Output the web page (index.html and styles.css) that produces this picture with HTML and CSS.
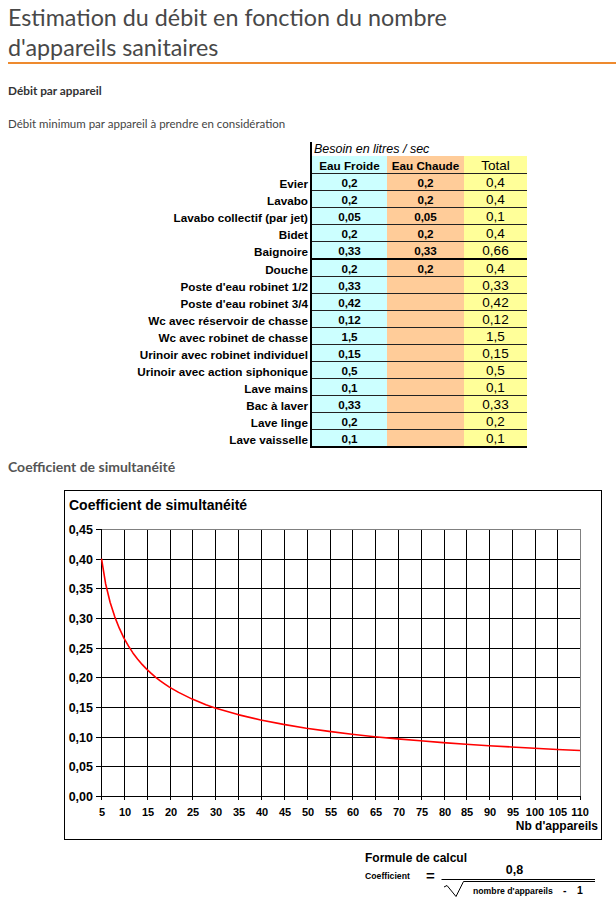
FILE: index.html
```html
<!DOCTYPE html>
<html lang="fr">
<head>
<meta charset="utf-8">
<title>Estimation du débit</title>
<link rel="stylesheet" href="styles.css">
</head>
<body>
<h1 class="title">Estimation du débit en fonction du nombre<br>d'appareils sanitaires</h1>
<h2 class="sub">Débit par appareil</h2>
<p class="intro">Débit minimum par appareil à prendre en considération</p>

<table class="debits">
  <tr class="unit"><td class="lbl"></td><td class="unit-cell" colspan="3">Besoin en litres / sec</td></tr>
  <tr class="head"><td class="lbl"></td><td class="ef">Eau Froide</td><td class="ec">Eau Chaude</td><td class="tot">Total</td></tr>
  <tr><td class="lbl">Evier</td><td class="ef">0,2</td><td class="ec">0,2</td><td class="tot">0,4</td></tr>
  <tr><td class="lbl">Lavabo</td><td class="ef">0,2</td><td class="ec">0,2</td><td class="tot">0,4</td></tr>
  <tr><td class="lbl">Lavabo collectif (par jet)</td><td class="ef">0,05</td><td class="ec">0,05</td><td class="tot">0,1</td></tr>
  <tr><td class="lbl">Bidet</td><td class="ef">0,2</td><td class="ec">0,2</td><td class="tot">0,4</td></tr>
  <tr class="sep"><td class="lbl">Baignoire</td><td class="ef">0,33</td><td class="ec">0,33</td><td class="tot">0,66</td></tr>
  <tr><td class="lbl">Douche</td><td class="ef">0,2</td><td class="ec">0,2</td><td class="tot">0,4</td></tr>
  <tr><td class="lbl">Poste d'eau robinet 1/2</td><td class="ef">0,33</td><td class="ec"></td><td class="tot">0,33</td></tr>
  <tr><td class="lbl">Poste d'eau robinet 3/4</td><td class="ef">0,42</td><td class="ec"></td><td class="tot">0,42</td></tr>
  <tr><td class="lbl">Wc avec réservoir de chasse</td><td class="ef">0,12</td><td class="ec"></td><td class="tot">0,12</td></tr>
  <tr><td class="lbl">Wc avec robinet de chasse</td><td class="ef">1,5</td><td class="ec"></td><td class="tot">1,5</td></tr>
  <tr><td class="lbl">Urinoir avec robinet individuel</td><td class="ef">0,15</td><td class="ec"></td><td class="tot">0,15</td></tr>
  <tr><td class="lbl">Urinoir avec action siphonique</td><td class="ef">0,5</td><td class="ec"></td><td class="tot">0,5</td></tr>
  <tr><td class="lbl">Lave mains</td><td class="ef">0,1</td><td class="ec"></td><td class="tot">0,1</td></tr>
  <tr><td class="lbl">Bac à laver</td><td class="ef">0,33</td><td class="ec"></td><td class="tot">0,33</td></tr>
  <tr><td class="lbl">Lave linge</td><td class="ef">0,2</td><td class="ec"></td><td class="tot">0,2</td></tr>
  <tr class="last"><td class="lbl">Lave vaisselle</td><td class="ef">0,1</td><td class="ec"></td><td class="tot">0,1</td></tr>
</table>

<h2 class="sub sub-coef">Coefficient de simultanéité</h2>

<div class="chart">
<svg class="chart-svg" width="536" height="348" viewBox="65 491 536 348" xmlns="http://www.w3.org/2000/svg">
  <text class="ch-title" x="69" y="510">Coefficient de simultanéité</text>
  <g class="grid" shape-rendering="crispEdges">
    <line x1="101" y1="559.5" x2="580" y2="559.5"/>
    <line x1="101" y1="588.5" x2="580" y2="588.5"/>
    <line x1="101" y1="618.5" x2="580" y2="618.5"/>
    <line x1="101" y1="648.5" x2="580" y2="648.5"/>
    <line x1="101" y1="677.5" x2="580" y2="677.5"/>
    <line x1="101" y1="707.5" x2="580" y2="707.5"/>
    <line x1="101" y1="737.5" x2="580" y2="737.5"/>
    <line x1="101" y1="766.5" x2="580" y2="766.5"/>
    <line x1="124.5" y1="529" x2="124.5" y2="800"/>
    <line x1="147.5" y1="529" x2="147.5" y2="800"/>
    <line x1="170.5" y1="529" x2="170.5" y2="800"/>
    <line x1="192.5" y1="529" x2="192.5" y2="800"/>
    <line x1="215.5" y1="529" x2="215.5" y2="800"/>
    <line x1="238.5" y1="529" x2="238.5" y2="800"/>
    <line x1="261.5" y1="529" x2="261.5" y2="800"/>
    <line x1="284.5" y1="529" x2="284.5" y2="800"/>
    <line x1="307.5" y1="529" x2="307.5" y2="800"/>
    <line x1="330.5" y1="529" x2="330.5" y2="800"/>
    <line x1="352.5" y1="529" x2="352.5" y2="800"/>
    <line x1="375.5" y1="529" x2="375.5" y2="800"/>
    <line x1="398.5" y1="529" x2="398.5" y2="800"/>
    <line x1="421.5" y1="529" x2="421.5" y2="800"/>
    <line x1="444.5" y1="529" x2="444.5" y2="800"/>
    <line x1="466.5" y1="529" x2="466.5" y2="800"/>
    <line x1="489.5" y1="529" x2="489.5" y2="800"/>
    <line x1="512.5" y1="529" x2="512.5" y2="800"/>
    <line x1="535.5" y1="529" x2="535.5" y2="800"/>
    <line x1="557.5" y1="529" x2="557.5" y2="800"/>
  </g>
  <g class="frame" shape-rendering="crispEdges">
    <line x1="101" y1="529.5" x2="580.5" y2="529.5"/>
    <line x1="580.5" y1="529" x2="580.5" y2="796"/>
  </g>
  <g class="axis" shape-rendering="crispEdges">
    <line x1="101.5" y1="529" x2="101.5" y2="800"/>
    <line x1="96" y1="796.5" x2="581" y2="796.5"/>
    <line x1="580.5" y1="796" x2="580.5" y2="800"/>
    <line x1="96" y1="529.5" x2="101" y2="529.5"/>
    <line x1="96" y1="559.5" x2="101" y2="559.5"/>
    <line x1="96" y1="588.5" x2="101" y2="588.5"/>
    <line x1="96" y1="618.5" x2="101" y2="618.5"/>
    <line x1="96" y1="648.5" x2="101" y2="648.5"/>
    <line x1="96" y1="677.5" x2="101" y2="677.5"/>
    <line x1="96" y1="707.5" x2="101" y2="707.5"/>
    <line x1="96" y1="737.5" x2="101" y2="737.5"/>
    <line x1="96" y1="766.5" x2="101" y2="766.5"/>
  </g>
  <g class="ylab">
    <text x="93" y="534">0,45</text>
    <text x="93" y="564">0,40</text>
    <text x="93" y="593">0,35</text>
    <text x="93" y="623">0,30</text>
    <text x="93" y="653">0,25</text>
    <text x="93" y="682">0,20</text>
    <text x="93" y="712">0,15</text>
    <text x="93" y="742">0,10</text>
    <text x="93" y="771">0,05</text>
    <text x="93" y="801">0,00</text>
  </g>
  <g class="xlab">
    <text x="102" y="816">5</text>
    <text x="125" y="816">10</text>
    <text x="148" y="816">15</text>
    <text x="171" y="816">20</text>
    <text x="193" y="816">25</text>
    <text x="216" y="816">30</text>
    <text x="239" y="816">35</text>
    <text x="262" y="816">40</text>
    <text x="285" y="816">45</text>
    <text x="308" y="816">50</text>
    <text x="331" y="816">55</text>
    <text x="353" y="816">60</text>
    <text x="376" y="816">65</text>
    <text x="399" y="816">70</text>
    <text x="422" y="816">75</text>
    <text x="445" y="816">80</text>
    <text x="467" y="816">85</text>
    <text x="490" y="816">90</text>
    <text x="513" y="816">95</text>
    <text x="535" y="816">100</text>
    <text x="558" y="816">105</text>
    <text x="580" y="816">110</text>
  </g>
  <text class="x-title" x="598" y="830">Nb d'appareils</text>
  <polyline class="curve" points="101.5,558.7 105.6,583.7 110.1,602.2 114.7,616.6 119.3,628.2 123.8,637.8 128.4,645.9 132.9,652.9 137.5,659.0 142.1,664.4 146.6,669.1 151.2,673.4 155.7,677.3 160.3,680.9 164.9,684.1 169.4,687.1 178.6,692.4 192.2,699.1 205.9,704.7 215.1,707.9 237.9,714.6 260.7,720.0 283.5,724.4 306.3,728.2 329.1,731.4 351.9,734.2 374.7,736.7 397.5,738.9 420.3,740.8 443.1,742.6 466.0,744.2 488.8,745.7 511.6,747.0 534.4,748.3 557.2,749.5 580,750.5"/>
</svg>
</div>

<div class="formula">
<svg width="276" height="62" viewBox="340 840 276 62" xmlns="http://www.w3.org/2000/svg">
  <text class="f-title" x="365" y="862">Formule de calcul</text>
  <text class="f-small" x="365" y="879">Coefficient</text>
  <text class="f-eq" x="426" y="881">=</text>
  <text class="f-num" x="514.5" y="874">0,8</text>
  <line class="f-line" x1="441.5" y1="879.5" x2="595" y2="879.5"/>
  <polyline class="f-rad" points="444,887 447,885.5 456,896.5 463.5,881.5 595,881.5"/>
  <text class="f-small" x="473" y="894">nombre d'appareils</text>
  <text class="f-minus" x="563" y="894">-</text>
  <text class="f-minus" x="577" y="894">1</text>
</svg>
</div>
</body>
</html>
```

FILE: styles.css
```css
html {
  overflow: hidden;
}

body {
  margin: 0;
  padding: 0 0 0 8px;
  font-family: Lato, "Open Sans", sans-serif;
  color: #333;
  background: #fff;
}

.title {
  margin: 0;
  padding: 2px 0 0;
  font-size: 23.3px;
  font-weight: 400;
  line-height: 30px;
  color: #484848;
  border-bottom: 2px solid #ee8a2e;
}

.sub {
  margin: 19px 0 0;
  font-size: 11.8px;
  font-weight: 700;
  line-height: 16px;
  color: #333;
}

.intro {
  margin: 17px 0 0;
  font-size: 11.5px;
  line-height: 16px;
  color: #444;
}

.debits {
  margin-top: 10px;
  border-collapse: collapse;
  font-family: "Liberation Sans", Arial, sans-serif;
  color: #000;
}

.debits td {
  padding: 0;
  height: 16px;
  vertical-align: bottom;
  font-size: 11.7px;
  font-weight: 700;
  line-height: 14px;
}

.debits .lbl {
  width: 300px;
  padding-right: 2px;
  text-align: right;
  border: 0;
}

.debits .ef,
.debits .unit-cell {
  border-left: 2px solid #000;
}

.debits .unit td {
  height: 14px;
}

.debits .head td {
  height: 17px;
}

.debits .unit-cell {
  font-style: italic;
  font-weight: 400;
  font-size: 12.5px;
  line-height: 14px;
  padding-left: 2px;
  vertical-align: bottom;
}

.debits .ef {
  width: 75px;
  background: #ccffff;
  text-align: center;
}

.debits .ec {
  width: 77px;
  background: #ffcc99;
  text-align: center;
}

.debits .tot {
  width: 63px;
  background: #ffff99;
  text-align: center;
  font-weight: 400;
  font-size: 13.5px;
  line-height: 15px;
}

.debits tr:not(.unit):not(.head) .ef,
.debits tr:not(.unit):not(.head) .ec,
.debits tr:not(.unit):not(.head) .tot {
  border-top: 1px solid #222;
}

.debits .sep .ef,
.debits .sep .ec,
.debits .sep .tot,
.debits .last .ef,
.debits .last .ec,
.debits .last .tot {
  border-bottom: 2px solid #000;
}

.sub-coef {
  margin-top: 10px;
  font-size: 14px;
  line-height: 17px;
  color: #555;
}

.chart {
  margin: 15px 0 0 56px;
  width: 536px;
  height: 348px;
  border: 1px solid #000;
}

.chart-svg {
  display: block;
  font-family: "Liberation Sans", Arial, sans-serif;
}

.ch-title {
  font-size: 14px;
  font-weight: 700;
  fill: #000;
}

.grid line {
  stroke: #000;
  stroke-width: 1;
}

.frame line {
  stroke: #808080;
  stroke-width: 1;
}

.axis line {
  stroke: #000;
  stroke-width: 1;
}

.ylab text {
  font-size: 12.5px;
  font-weight: 700;
  text-anchor: end;
  fill: #000;
}

.xlab text {
  font-size: 11px;
  font-weight: 700;
  text-anchor: middle;
  fill: #000;
}

.x-title {
  font-size: 12px;
  font-weight: 700;
  text-anchor: end;
  fill: #000;
}

.curve {
  fill: none;
  stroke: #ff0000;
  stroke-width: 1.6;
  stroke-linejoin: round;
}

.formula {
  margin-left: 332px;
  width: 276px;
  height: 62px;
}

.formula svg {
  display: block;
  font-family: "Liberation Sans", Arial, sans-serif;
  font-weight: 700;
}

.f-title {
  font-size: 12px;
  fill: #000;
}

.f-small {
  font-size: 8.7px;
  fill: #000;
}

.f-eq {
  font-size: 15px;
  fill: #000;
}

.f-num {
  font-size: 12.5px;
  text-anchor: middle;
  fill: #000;
}

.f-minus {
  font-size: 10.5px;
  fill: #000;
}

.f-line,
.f-rad {
  fill: none;
  stroke: #000;
  stroke-width: 1;
}
```
